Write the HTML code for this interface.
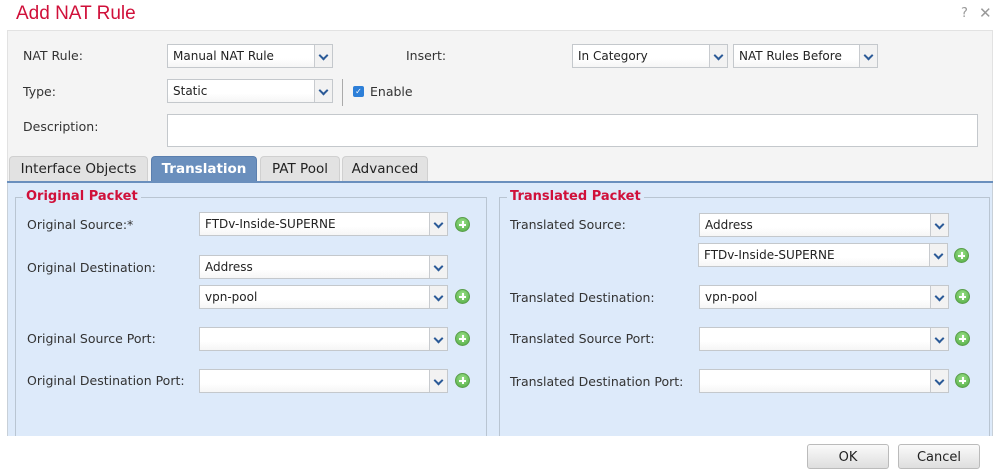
<!DOCTYPE html>
<html><head><style>
*{box-sizing:border-box;margin:0;padding:0}
body{width:999px;height:475px;background:#fff;font-family:"DejaVu Sans","Liberation Sans",sans-serif;font-size:12.5px;color:#333;position:relative;overflow:hidden}
.a{position:absolute}
.sel{position:absolute;height:24px;background:linear-gradient(#fff,#fff 60%,#f6f6f6);border:1px solid #c4c8cc;font-size:12px;color:#222;padding:4px 0 0 5px;white-space:nowrap}
.sel .dd{position:absolute;right:0;top:0;width:18px;height:22px;border-left:1px solid #c8cbcf;background:#f2f2f2}
.sel .dd:after{content:"";position:absolute;left:5px;top:7px;width:5px;height:5px;border-right:2px solid #2b5a97;border-bottom:2px solid #2b5a97;transform:rotate(45deg)}
.plus{position:absolute;width:15px;height:15px;border-radius:50%;background:radial-gradient(circle at 50% 35%,#9be28b,#4ea83e);border:1px solid #5a9e4c}
.plus:before{content:"";position:absolute;left:6px;top:3px;width:2px;height:7px;background:#fff}
.plus:after{content:"";position:absolute;left:3px;top:6px;width:7px;height:2px;background:#fff}
.lbl{position:absolute;font-size:12.5px;color:#333}
.tab{position:absolute;top:156px;height:25px;background:#e2e2e2;border:1px solid #d0d0d0;border-bottom:none;border-radius:4px 4px 0 0;font-size:13.5px;color:#222;text-align:center;padding-top:4px}
.fs{position:absolute;border:1px solid #b9c5d2;border-bottom:none}
.leg{position:absolute;top:-9px;left:7px;background:#ddeafa;padding:0 3px;color:#d0103a;font-weight:bold;font-size:13px}
.btn{position:absolute;top:444px;height:25px;width:82px;border:1px solid #bbb;border-radius:3px;background:linear-gradient(#fafafa,#dedede);text-align:center;font-size:13px;padding-top:5px;color:#222}
</style></head><body>
<div class="a" style="left:16px;top:3px;font-size:19px;color:#d0103a;font-family:'Liberation Sans',sans-serif">Add NAT Rule</div>
<div class="a" style="left:961px;top:6px;color:#999;font-size:13px">?</div>
<div class="a" style="left:979px;top:4px;color:#999;font-size:15px">✕</div>
<div class="a" style="left:7px;top:30px;width:986px;height:152px;background:#f4f4f4;border:1px solid #e2e2e2"></div>
<div class="lbl" style="left:23px;top:48px">NAT Rule:</div>
<div class="sel" style="left:167px;top:44px;width:166px">Manual NAT Rule<div class="dd"></div></div>
<div class="lbl" style="left:406px;top:48px">Insert:</div>
<div class="sel" style="left:572px;top:44px;width:156px">In Category<div class="dd"></div></div>
<div class="sel" style="left:733px;top:44px;width:145px">NAT Rules Before<div class="dd"></div></div>
<div class="lbl" style="left:23px;top:84px">Type:</div>
<div class="sel" style="left:167px;top:79px;width:166px">Static<div class="dd"></div></div>
<div class="a" style="left:342px;top:79px;width:1px;height:27px;background:#aaa"></div>
<div class="a" style="left:353px;top:86px;width:11px;height:11px;border-radius:2px;background:#2d7fd8;color:#fff;font-size:8px;text-align:center;line-height:11px">✓</div>
<div class="lbl" style="left:370px;top:84px">Enable</div>
<div class="lbl" style="left:23px;top:119px">Description:</div>
<div class="a" style="left:167px;top:114px;width:811px;height:33px;background:#fff;border:1px solid #c4c8cc"></div>
<div class="tab" style="left:9px;width:139px">Interface Objects</div>
<div class="tab" style="left:151px;width:106px;background:#6a8fbd;border-color:#5b7fae;color:#fff;font-weight:bold">Translation</div>
<div class="tab" style="left:260px;width:80px">PAT Pool</div>
<div class="tab" style="left:342px;width:86px">Advanced</div>
<div class="a" style="left:7px;top:181px;width:986px;height:2px;background:#6a8fbd"></div>
<div class="a" style="left:7px;top:183px;width:986px;height:253px;background:#ddeafa;border-left:1px solid #c8d0d8;border-right:1px solid #c8d0d8"></div>
<div class="fs" style="left:15px;top:197px;width:472px;height:239px"><div class="leg">Original Packet</div></div>
<div class="fs" style="left:499px;top:197px;width:491px;height:239px"><div class="leg">Translated Packet</div></div>
<div class="lbl" style="left:27px;top:217px">Original Source:*</div>
<div class="sel" style="left:199px;top:212px;width:249px">FTDv-Inside-SUPERNE<div class="dd"></div></div><div class="plus" style="left:455px;top:217px"></div>
<div class="lbl" style="left:27px;top:260px">Original Destination:</div>
<div class="sel" style="left:199px;top:255px;width:249px">Address<div class="dd"></div></div>
<div class="sel" style="left:199px;top:285px;width:249px">vpn-pool<div class="dd"></div></div><div class="plus" style="left:455px;top:289px"></div>
<div class="lbl" style="left:27px;top:331px">Original Source Port:</div>
<div class="sel" style="left:199px;top:327px;width:249px"><div class="dd"></div></div><div class="plus" style="left:455px;top:331px"></div>
<div class="lbl" style="left:27px;top:373px">Original Destination Port:</div>
<div class="sel" style="left:199px;top:369px;width:249px"><div class="dd"></div></div><div class="plus" style="left:455px;top:373px"></div>
<div class="lbl" style="left:510px;top:217px">Translated Source:</div>
<div class="sel" style="left:699px;top:213px;width:250px">Address<div class="dd"></div></div>
<div class="sel" style="left:698px;top:243px;width:250px">FTDv-Inside-SUPERNE<div class="dd"></div></div><div class="plus" style="left:954px;top:248px"></div>
<div class="lbl" style="left:510px;top:290px">Translated Destination:</div>
<div class="sel" style="left:699px;top:285px;width:250px">vpn-pool<div class="dd"></div></div><div class="plus" style="left:955px;top:289px"></div>
<div class="lbl" style="left:510px;top:331px">Translated Source Port:</div>
<div class="sel" style="left:699px;top:327px;width:250px"><div class="dd"></div></div><div class="plus" style="left:955px;top:331px"></div>
<div class="lbl" style="left:510px;top:374px">Translated Destination Port:</div>
<div class="sel" style="left:699px;top:369px;width:250px"><div class="dd"></div></div><div class="plus" style="left:955px;top:373px"></div>
<div class="btn" style="left:807px">OK</div>
<div class="btn" style="left:898px">Cancel</div>
</body></html>
